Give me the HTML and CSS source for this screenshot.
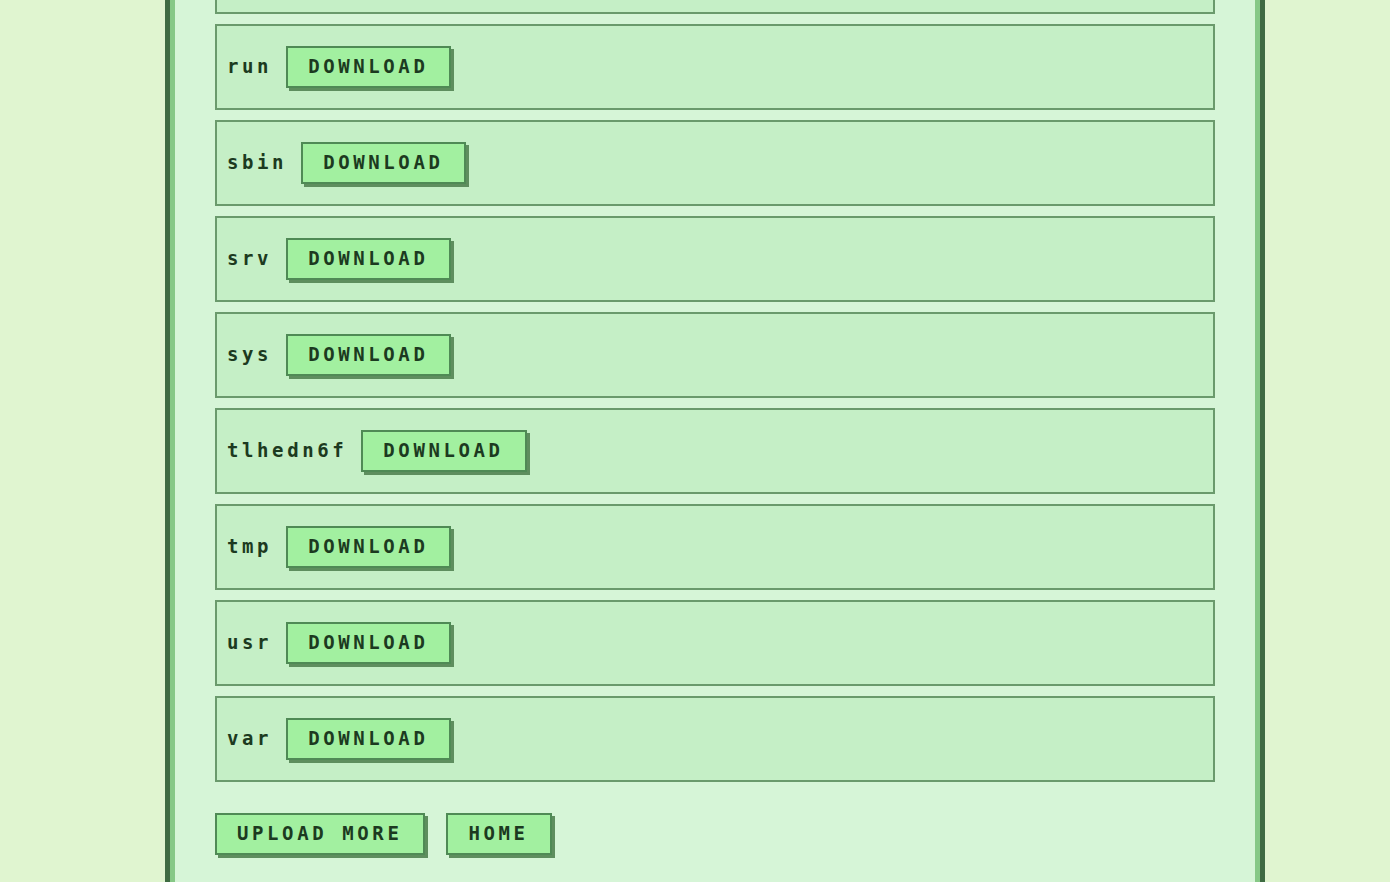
FILE: index.html
```html
<html>
<head>
<title>Files</title>
<link rel="stylesheet" href="styles.css">
</head>
<body>
<div class="page">
  <div class="list">
    <div class="entry"><span class="name">root</span><a class="btn" href="#">DOWNLOAD</a></div>
    <div class="entry"><span class="name">run</span><a class="btn" href="#">DOWNLOAD</a></div>
    <div class="entry"><span class="name">sbin</span><a class="btn" href="#">DOWNLOAD</a></div>
    <div class="entry"><span class="name">srv</span><a class="btn" href="#">DOWNLOAD</a></div>
    <div class="entry"><span class="name">sys</span><a class="btn" href="#">DOWNLOAD</a></div>
    <div class="entry"><span class="name">tlhedn6f</span><a class="btn" href="#">DOWNLOAD</a></div>
    <div class="entry"><span class="name">tmp</span><a class="btn" href="#">DOWNLOAD</a></div>
    <div class="entry"><span class="name">usr</span><a class="btn" href="#">DOWNLOAD</a></div>
    <div class="entry"><span class="name">var</span><a class="btn" href="#">DOWNLOAD</a></div>
  </div>

  <div class="actions">
    <a class="btn" href="#">UPLOAD MORE</a>
    <a class="btn" href="#">HOME</a>
  </div>
</div>
</body>
</html>
```

FILE: styles.css
```css
body {
  margin: 0;
  background-color: #e0f5d0;
  font-family: "DejaVu Sans Mono", "Liberation Mono", monospace;
  font-weight: bold;
  font-size: 19px;
  color: #1c3a20;
  overflow: hidden;
}

div.page {
  width: 1000px;
  margin-left: 165px;
  padding: 0 45px 60px 45px;
  background-color: #d6f5d7;
  border-left: 5px solid #3e6b42;
  border-right: 5px solid #3e6b42;
  box-shadow: inset 5px 0 0 #86c886, inset -5px 0 0 #86c886;
  min-height: 900px;
}

div.list {
  display: flex;
  flex-direction: column;
  gap: 10px;
  margin-top: -72px;
}

div.entry {
  display: flex;
  align-items: center;
  padding: 20px 10px;
  background-color: #c5efc6;
  border: 2px solid #6a9a6c;
}

span.name {
  letter-spacing: 3.6px;
  line-height: 22px;
  padding-bottom: 3px;
  margin-right: 14px;
}

a.btn {
  display: inline-block;
  padding: 7px 21px 9px 20px;
  line-height: 22px;
  letter-spacing: 3.6px;
  color: #1c3a20;
  text-decoration: none;
  background-color: #a2f0a0;
  border: 2px solid #4f8a55;
  box-shadow: 3px 3px 0 #5e8e5e;
}

div.actions {
  display: flex;
  gap: 21px;
  margin-top: 31px;
}
```
